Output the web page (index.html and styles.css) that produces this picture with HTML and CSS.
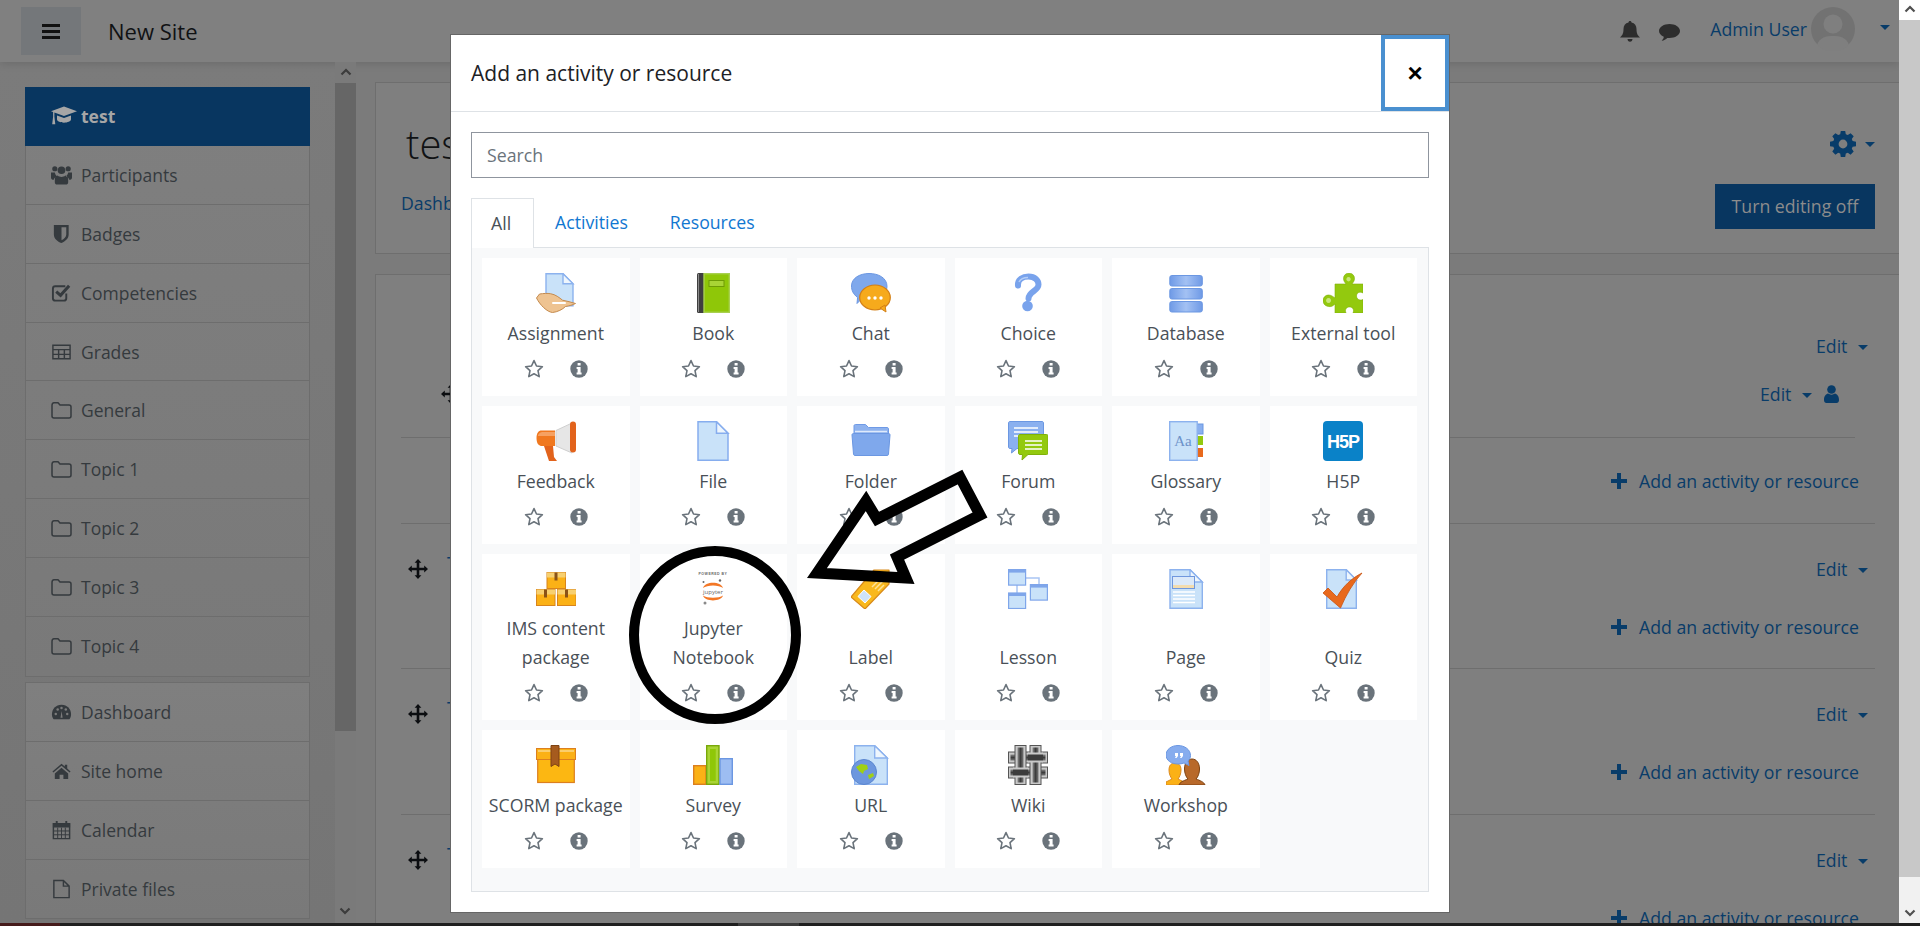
FILE: index.html
```html
<!DOCTYPE html>
<html>
<head>
	<title>New Site: test</title>
	<link rel="stylesheet" href="styles.css">
</head>
<body>
	<svg class="defs" width="0" height="0">
		<symbol id="i-star" viewBox="0 0 20 20"><path d="M10 1.6l2.5 5.4 5.9.7-4.4 4 1.2 5.9L10 14.7l-5.2 2.9L6 11.7l-4.4-4 5.9-.7z" fill="#fff" stroke="#6a737b" stroke-width="1.6" stroke-linejoin="round"/></symbol>
		<symbol id="i-info" viewBox="0 0 18 18"><circle cx="9" cy="9" r="8.7" fill="#6a737b"/><path d="M7.6 2.9h3v2.6h-3zM6.6 7h4v5.6h1v2H6.6v-2h1V9h-1z" fill="#fff"/></symbol>
		<symbol id="i-folder" viewBox="0 0 21 18"><path d="M1 4.5C1 2.6 2 1.700 3 1.700h4l2 2.300h9c1.200 0 2 .8 2 2v9c0 1.200-.8 2-2 2H3c-1.200 0-2-.8-2-2z" fill="none" stroke="currentColor" stroke-width="1.500"/></symbol>
		<symbol id="i-move" viewBox="0 0 20 20"><path d="M10 0l3.400 3.800h-2.100v4.900h4.900V6.600L20 10l-3.800 3.400v-2.100h-4.900v4.900h2.100L10 20l-3.400-3.800h2.100v-4.900H3.800v2.100L0 10l3.800-3.400v2.100h4.900V3.800H6.600z" fill="#0b0d10"/></symbol>
		<symbol id="i-plus" viewBox="0 0 16 16"><path d="M6 0h4v6h6v4h-6v6H6v-6H0V6h6z" fill="#083c69"/></symbol>
	</svg>

	<div class="window">
		<div class="page">
			<header class="navbar">
				<div class="nav-left">
					<button class="burger"><span></span><span></span><span></span></button>
					<span class="brand">New Site</span>
				</div>
				<div class="nav-right">
					<svg class="bell" viewBox="0 0 20 21"><path d="M10 0c1 0 1.500.7 1.500 1.500 3.300.6 5 3.200 5 6.500 0 5 1.500 6.500 3.500 8.500H0c2-2 3.500-3.500 3.500-8.500 0-3.300 1.700-5.900 5-6.500C8.500.7 9 0 10 0zM7.500 18h5c0 1.500-1 2.700-2.500 2.700S7.500 19.500 7.500 18z" fill="#2d2d2d"/></svg>
					<svg class="bubble" viewBox="0 0 21 18"><path d="M10.500 1C16 1 21 3.800 21 8s-5 7-10.500 7c-.8 0-1.500 0-2.200-.1C6.800 16.200 5 17.500 2.700 17.800c1-1.200 2-2.400 2.100-4C2 12.500 0 10.500 0 8c0-4.200 5-7 10.500-7z" fill="#2d2d2d"/></svg>
					<a class="user-name">Admin User</a>
					<span class="avatar">
						<svg viewBox="0 0 44 44"><circle cx="22" cy="22" r="22" fill="#727272"/><circle cx="22" cy="17" r="9.500" fill="#7f7f7f"/><path d="M6 38c3-8 9-9 16-9s13 1 16 9a22 22 0 0 1-32 0z" fill="#7f7f7f"/></svg>
					</span>
					<span class="caret caret-user"></span>
				</div>
			</header>

			<div class="layout">
				<aside class="drawer">
					<nav class="drawer-nav">
						<ul class="nav-group">
							<li class="nav-item active">
								<svg class="nav-icon cap" viewBox="0 0 26 20"><path d="M13 .5l13 4.700-13 4.800L3.400 6.500v4.200l.9 7.500H1.200l.9-7.500V6L0 5.200zM6 9.500l7 2.600 7-2.600v3.800c0 2-3.500 3.400-7 3.400S6 15.300 6 13.300z" fill="#a6a6a6"/></svg>
								<b>test</b>
							</li>
							<li class="nav-item">
								<svg class="nav-icon" viewBox="0 0 22 20"><g fill="currentColor"><circle cx="4" cy="3.500" r="2.700"/><circle cx="18" cy="3.500" r="2.700"/><circle cx="11" cy="5" r="4"/><path d="M0 7.500h4c.5 2 1 3 2.300 4-2 .5-3 1.700-3.400 3.500C1 15 0 14 0 12.500zM22 7.500h-4c-.5 2-1 3-2.300 4 2 .5 3 1.700 3.400 3.500 1.900 0 2.900-1 2.900-2.500zM7 10.500c1 1 2.500 1.500 4 1.500s3-.5 4-1.500c1.900.4 3 2 3 4.500v2.500c0 1.500-1 2.500-2.500 2.500h-9C5 20 4 19 4 17.500V15c0-2.500 1.100-4.100 3-4.500z"/></g></svg>
								<span>Participants</span>
							</li>
							<li class="nav-item">
								<svg class="nav-icon" viewBox="0 0 22 20"><path d="M3 .5h15.500v10c0 4.500-4 7.500-7.700 9C7 18 3 15 3 10.500zM11 3v13.500c2.700-1.300 5-3.400 5-6V3z" fill="currentColor" fill-rule="evenodd"/></svg>
								<span>Badges</span>
							</li>
							<li class="nav-item">
								<svg class="nav-icon" viewBox="0 0 22 20"><path d="M16 10.500v5c0 1.400-1 2.500-2.500 2.500h-9C3 18 2 16.900 2 15.500v-10C2 4.100 3 3 4.500 3H15" fill="none" stroke="currentColor" stroke-width="2"/><path d="M5.500 8.500l4.500 4L19 2.500" fill="none" stroke="currentColor" stroke-width="3.200"/></svg>
								<span>Competencies</span>
							</li>
							<li class="nav-item">
								<svg class="nav-icon" viewBox="0 0 22 18"><path d="M2 2h18v14H2zM2 6.500h18M2 11.500h18M8 6.500V16M14 6.500V16" fill="none" stroke="currentColor" stroke-width="1.500"/></svg>
								<span>Grades</span>
							</li>
							<li class="nav-item"><svg class="nav-icon"><use href="#i-folder"/></svg><span>General</span></li>
							<li class="nav-item"><svg class="nav-icon"><use href="#i-folder"/></svg><span>Topic 1</span></li>
							<li class="nav-item"><svg class="nav-icon"><use href="#i-folder"/></svg><span>Topic 2</span></li>
							<li class="nav-item"><svg class="nav-icon"><use href="#i-folder"/></svg><span>Topic 3</span></li>
							<li class="nav-item"><svg class="nav-icon"><use href="#i-folder"/></svg><span>Topic 4</span></li>
						</ul>
						<ul class="nav-group second">
							<li class="nav-item">
								<svg class="nav-icon" viewBox="0 0 22 18"><path d="M11 1.500C5 1.500 1 6 1 11.500c0 1.800.5 3.200 1.300 4.500.3.400.7.500 1.200.5h15c.5 0 .9-.1 1.200-.5.800-1.300 1.300-2.700 1.300-4.500 0-5.500-4-10-10-10z" fill="currentColor"/><g fill="#7b7b7b"><circle cx="5" cy="11" r="1.300"/><circle cx="7" cy="6.500" r="1.300"/><circle cx="11" cy="4.700" r="1.300"/><circle cx="15.500" cy="6.500" r="1.300"/><circle cx="17" cy="11" r="1.300"/><path d="M10 15l1-7 1.200 7z"/></g></svg>
								<span>Dashboard</span>
							</li>
							<li class="nav-item">
								<svg class="nav-icon" viewBox="0 0 22 18"><path d="M11 1.500L1.500 9.500l1 1.200L11 3.600l8.500 7.100 1-1.200-3.500-3V2.500h-2.500v1.700zM4 11.500L11 5.600l7 5.900v6h-5v-4.500H9v4.500H4z" fill="currentColor"/></svg>
								<span>Site home</span>
							</li>
							<li class="nav-item">
								<svg class="nav-icon" viewBox="0 0 22 20"><path d="M2.500 3.500h17v15.500h-17z" fill="none" stroke="currentColor" stroke-width="1.500"/><path d="M2 3h18v4.500H2zM5 .5h2v4.500H5zM15 .5h2v4.500h-2z" fill="currentColor"/><path d="M2.500 11h17M2.500 15h17M7 7.500V19M11 7.500V19M15 7.500V19" fill="none" stroke="currentColor" stroke-width="1"/></svg>
								<span>Calendar</span>
							</li>
							<li class="nav-item">
								<svg class="nav-icon" viewBox="0 0 22 20"><path d="M3 1h10l6 6v12H3zM13 1v6h6" fill="none" stroke="currentColor" stroke-width="1.500"/></svg>
								<span>Private files</span>
							</li>
						</ul>
					</nav>
					<div class="drawer-scroll">
						<svg class="chev" viewBox="0 0 12 8"><path d="M1.500 6.500L6 2l4.500 4.500" fill="none" stroke="#3c3c3c" stroke-width="2.200"/></svg>
						<div class="drawer-thumb"></div>
						<svg class="chev down" viewBox="0 0 12 8"><path d="M1.500 1.500L6 6l4.500-4.500" fill="none" stroke="#3c3c3c" stroke-width="2.200"/></svg>
					</div>
				</aside>

				<main class="main">
					<section class="head-card">
						<div class="head-left">
							<h1>test</h1>
							<a class="crumb">Dashboard</a>
						</div>
						<div class="head-right">
							<div class="gear-row">
								<svg class="gear" viewBox="0 0 26 26"><path d="M10.800 0h4.400l.6 3.300 2 .8 2.800-1.900 3.100 3.100-1.900 2.800.8 2 3.400.7v4.400l-3.400.6-.8 2 1.900 2.800-3.100 3.100-2.800-1.900-2 .8-.6 3.400h-4.400l-.6-3.400-2-.8-2.800 1.900-3.100-3.100 1.900-2.800-.8-2L0 15.200v-4.400l3.400-.7.800-2-1.900-2.800 3.100-3.100 2.800 1.900 2-.8zM13 8.600a4.400 4.400 0 1 0 0 8.800 4.400 4.400 0 0 0 0-8.800z" fill="#083c69" fill-rule="evenodd"/></svg>
								<span class="caret"></span>
							</div>
							<a class="btn-edit">Turn editing off</a>
						</div>
					</section>

					<section class="course">
						<div class="sec first">
							<div class="sec-head"><a class="edit">Edit <span class="caret"></span></a></div>
							<div class="activity">
								<svg class="move"><use href="#i-move"/></svg>
								<a class="edit">Edit <span class="caret"></span></a>
								<svg class="user-mini" viewBox="0 0 15 18"><circle cx="7.500" cy="4.500" r="4.300" fill="#083c69"/><path d="M0 15c0-4 2-6 4-6.500 2 1.500 5 1.500 7 0 2 .5 4 2.500 4 6.500 0 2-1 3-2.500 3h-10C1 18 0 17 0 15z" fill="#083c69"/></svg>
							</div>
							<a class="add"><svg class="plus"><use href="#i-plus"/></svg>Add an activity or resource</a>
						</div>
						<div class="sec">
							<div class="sec-head">
								<svg class="move"><use href="#i-move"/></svg>
								<span class="sec-title">Topic 1</span>
								<a class="edit">Edit <span class="caret"></span></a>
							</div>
							<a class="add"><svg class="plus"><use href="#i-plus"/></svg>Add an activity or resource</a>
						</div>
						<div class="sec">
							<div class="sec-head">
								<svg class="move"><use href="#i-move"/></svg>
								<span class="sec-title">Topic 2</span>
								<a class="edit">Edit <span class="caret"></span></a>
							</div>
							<a class="add"><svg class="plus"><use href="#i-plus"/></svg>Add an activity or resource</a>
						</div>
						<div class="sec">
							<div class="sec-head">
								<svg class="move"><use href="#i-move"/></svg>
								<span class="sec-title">Topic 3</span>
								<a class="edit">Edit <span class="caret"></span></a>
							</div>
							<a class="add"><svg class="plus"><use href="#i-plus"/></svg>Add an activity or resource</a>
						</div>
					</section>
				</main>
			</div>
		</div>

		<div class="win-scroll">
			<div class="win-btn">
				<svg class="win-chev" viewBox="0 0 12 8"><path d="M1.500 6.500L6 2l4.500 4.500" fill="none" stroke="#505050" stroke-width="2.200"/></svg>
			</div>
			<div class="win-thumb"></div>
			<div class="win-track">
				<svg class="win-chev" viewBox="0 0 12 8"><path d="M1.500 1.500L6 6l4.500-4.500" fill="none" stroke="#505050" stroke-width="2.200"/></svg>
			</div>
		</div>
	</div>

	<div class="taskbar"><span class="task-red"></span><span class="task-on"></span></div>

	<!-- Add activity dialog -->
	<div class="modal">
		<div class="modal-header">
			<h5>Add an activity or resource</h5>
			<button class="close">&times;</button>
		</div>
		<div class="modal-body">
			<div class="search">Search</div>
			<ul class="tabs">
				<li class="tab current">All</li>
				<li class="tab">Activities</li>
				<li class="tab">Resources</li>
			</ul>
			<div class="panel">
				<div class="card">
					<svg class="mod" viewBox="0 0 40 40"><path d="M10 .7h17l10 10v22H10z" fill="#c9e2f9" stroke="#8cb2ee" stroke-width="1.400"/><path d="M27 .7v10h10z" fill="#eef6fd" stroke="#8cb2ee" stroke-width="1.400"/><path d="M.5 25l3-4c4-.6 8-.8 11-.3 5 .8 9 4 12 6.500 4 1 9 1.800 13 3.300-3 1.500-6 2.300-10 3-3 3-8 5.500-13 6C11 39 4 32 .5 25z" fill="#eec391" stroke="#c48a4d" stroke-width="1"/><path d="M17 30h12" stroke="#fff" stroke-width="2" stroke-linecap="round"/></svg>
					<span class="label">Assignment</span>
					<div class="actions"><svg class="star"><use href="#i-star"/></svg><svg class="info"><use href="#i-info"/></svg></div>
				</div>
				<div class="card">
					<svg class="mod" viewBox="0 0 40 40"><rect x="4" y="0" width="9" height="40" rx="1.500" fill="#3f3f3f"/><path d="M5.500 1v38" stroke="#8a8a8a"/><rect x="11" y=".7" width="25.300" height="38.600" fill="#8fc708" stroke="#a8d050" stroke-width="1.400"/><rect x="16" y="7.500" width="15" height="6" fill="#a9d435" stroke="#6f9c05"/></svg>
					<span class="label">Book</span>
					<div class="actions"><svg class="star"><use href="#i-star"/></svg><svg class="info"><use href="#i-info"/></svg></div>
				</div>
				<div class="card">
					<svg class="mod" viewBox="0 0 40 40"><path d="M18 .5c9 0 18 4 18 13 0 8-8 12-16 12h-9l-5 5 .6-6C2 21 .5 17 .5 13 .5 5 9 .5 18 .5z" fill="#7fa8ec" stroke="#6b97e2"/><ellipse cx="24" cy="24.500" rx="15.300" ry="12.500" fill="#f6aa1c" stroke="#d37f16" stroke-width="1.200"/><path d="M29 35l6 4-1-7z" fill="#f6aa1c" stroke="#d37f16"/><circle cx="18" cy="25" r="1.700" fill="#fff"/><circle cx="24" cy="25" r="1.700" fill="#fff"/><circle cx="30" cy="25" r="1.700" fill="#fff"/></svg>
					<span class="label">Chat</span>
					<div class="actions"><svg class="star"><use href="#i-star"/></svg><svg class="info"><use href="#i-info"/></svg></div>
				</div>
				<div class="card">
					<svg class="mod" viewBox="0 0 40 40"><path d="M10 12.500C9.500 6 15 3.500 20.500 3.500 27 3.500 30.500 7.500 30.500 11.500c0 6.500-10 7-10 14" fill="none" stroke="#79a3ec" stroke-width="6" stroke-linecap="round"/><path d="M11 9C13 5 17 4.500 20 4.500" fill="none" stroke="#b5cef7" stroke-width="1.500"/><circle cx="19.500" cy="33" r="5.300" fill="#79a3ec"/></svg>
					<span class="label">Choice</span>
					<div class="actions"><svg class="star"><use href="#i-star"/></svg><svg class="info"><use href="#i-info"/></svg></div>
				</div>
				<div class="card">
					<svg class="mod" viewBox="0 0 40 40"><defs><linearGradient id="dbg" x1="0" x2="1" y1="0" y2="0"><stop offset="0" stop-color="#6f9ae6"/><stop offset=".5" stop-color="#a3c1f3"/><stop offset="1" stop-color="#6f9ae6"/></linearGradient></defs><g fill="url(#dbg)" stroke="#6b97e2"><rect x="3.800" y="2.500" width="32.500" height="10.500" rx="2"/><rect x="3.800" y="15.500" width="32.500" height="10.500" rx="2"/><rect x="3.800" y="28.500" width="32.500" height="10.500" rx="2"/></g></svg>
					<span class="label">Database</span>
					<div class="actions"><svg class="star"><use href="#i-star"/></svg><svg class="info"><use href="#i-info"/></svg></div>
				</div>
				<div class="card">
					<svg class="mod" viewBox="0 0 40 40"><path d="M12 11h11c-1-1.500-2.500-3-2.500-5.500a5.500 5.500 0 0 1 11 0c0 2.500-1.500 4-2.500 5.500h11v9c-3.500-2-6.500 0-6.500 3s3 5 6.500 3.500V40h-10c1.500-3.500-.5-6-3.500-6s-5 2.500-3.500 6H12v-9c-2 2-4 3-6.500 2.500C2 33 0 30.500 0 27.500 0 24 3 22 5.500 22c2.500 0 4.500 1.500 6.500 3z" fill="#93c90e" stroke="#7fb00a" stroke-width=".6"/><path d="M25.500 4a2.200 2.200 0 1 0 .1 0M5.500 25a2.500 2.500 0 1 0 .1 0" fill="#c8e67a"/></svg>
					<span class="label">External tool</span>
					<div class="actions"><svg class="star"><use href="#i-star"/></svg><svg class="info"><use href="#i-info"/></svg></div>
				</div>

				<div class="card">
					<svg class="mod" viewBox="0 0 40 40"><path d="M8 25l5 15h8l-3-4-1-11z" fill="#e2631c"/><path d="M20 9.500L36 2v30L20 25z" fill="#e6e6e6" stroke="#cfcfcf"/><path d="M5.500 9.500H19v15.500H6c-3 0-5.500-2-5.500-8 0-5 2-7.500 5-7.500z" fill="#f0781f"/><path d="M2 14c1.500-2.500 3-3 6-3h11v4H2z" fill="#f6a161"/><rect x="34" y=".5" width="6" height="31" rx="3" fill="#e2631c"/></svg>
					<span class="label">Feedback</span>
					<div class="actions"><svg class="star"><use href="#i-star"/></svg><svg class="info"><use href="#i-info"/></svg></div>
				</div>
				<div class="card">
					<svg class="mod" viewBox="0 0 40 40"><path d="M5 .8h18.500L35 12.300v26.900H5z" fill="#c9e2f9" stroke="#86adee" stroke-width="1.500"/><path d="M23.500.8v11.500H35z" fill="#eef6fd" stroke="#86adee" stroke-width="1.500"/></svg>
					<span class="label">File</span>
					<div class="actions"><svg class="star"><use href="#i-star"/></svg><svg class="info"><use href="#i-info"/></svg></div>
				</div>
				<div class="card">
					<svg class="mod" viewBox="0 0 40 40"><path d="M3 5c0-1 .6-1.500 1.500-1.500h10l3 3H36c1 0 1.500.6 1.500 1.500v5H3z" fill="#8eb2ee" stroke="#6f9ae6"/><path d="M4 10.500h32" stroke="#dfeafb" stroke-width="1.500"/><path d="M1 14c0-1 .6-1.500 1.500-1.500h35c1 0 1.500.6 1.500 1.500l-1.500 19c0 1-.6 1.500-1.500 1.500H4c-1 0-1.500-.6-1.500-1.500z" fill="#7fa8ec" stroke="#6b97e2"/></svg>
					<span class="label">Folder</span>
					<div class="actions"><svg class="star"><use href="#i-star"/></svg><svg class="info"><use href="#i-info"/></svg></div>
				</div>
				<div class="card">
					<svg class="mod" viewBox="0 0 40 40"><path d="M2 .5h32c1 0 1.500.6 1.500 1.500v24c0 1-.6 1.500-1.500 1.500H9L3.500 32l.5-4.500H2c-1 0-1.500-.6-1.500-1.500V2C.5 1.100 1 .5 2 .5z" fill="#8ab0ef" stroke="#6b97e2"/><path d="M6 7h24M6 11h24M6 15h24" stroke="#fff" stroke-width="1.500"/><path d="M12 13.500h26.500c1 0 1.500.6 1.500 1.500v17c0 1-.6 1.500-1.500 1.500H20l-6 5.500.5-5.500H12c-1 0-1.500-.6-1.500-1.500V15c0-1 .6-1.500 1.500-1.500z" fill="#93c90e" stroke="#7fb00a"/><path d="M17 20h17M17 24h17M17 28h17" stroke="#fff" stroke-width="1.500"/></svg>
					<span class="label">Forum</span>
					<div class="actions"><svg class="star"><use href="#i-star"/></svg><svg class="info"><use href="#i-info"/></svg></div>
				</div>
				<div class="card">
					<svg class="mod" viewBox="0 0 40 40"><rect x="30" y="3" width="7" height="10" fill="#8ab0ef" stroke="#6b97e2"/><rect x="31" y="15" width="6" height="9" fill="#93c90e"/><rect x="31" y="27" width="6" height="9" fill="#e8691d"/><rect x="3.700" y=".7" width="27.500" height="38.600" fill="#c9e2f9" stroke="#8cb2ee" stroke-width="1.400"/><text x="17" y="25" class="aa">Aa</text></svg>
					<span class="label">Glossary</span>
					<div class="actions"><svg class="star"><use href="#i-star"/></svg><svg class="info"><use href="#i-info"/></svg></div>
				</div>
				<div class="card">
					<svg class="mod" viewBox="0 0 40 40"><rect width="40" height="40" rx="4" fill="#0a82c8"/><text x="20" y="26.500" class="h5p">H5P</text></svg>
					<span class="label">H5P</span>
					<div class="actions"><svg class="star"><use href="#i-star"/></svg><svg class="info"><use href="#i-info"/></svg></div>
				</div>

				<div class="card">
					<svg class="mod" viewBox="0 0 40 40"><g fill="#fbb116" stroke="#d8841c"><rect x="11" y="3.500" width="18.500" height="16"/><rect x=".5" y="20.500" width="18.500" height="16"/><rect x="21.500" y="20.500" width="18.500" height="16"/></g><g fill="#f7d070"><rect x="11" y="3.500" width="18.500" height="5"/><rect x=".5" y="20.500" width="18.500" height="5"/><rect x="21.500" y="20.500" width="18.500" height="5"/></g><g fill="#8a5216"><rect x="18.500" y="3.500" width="3" height="8"/><rect x="8" y="20.500" width="3" height="8"/><rect x="29" y="20.500" width="3" height="8"/></g></svg>
					<span class="label">IMS content package</span>
					<div class="actions"><svg class="star"><use href="#i-star"/></svg><svg class="info"><use href="#i-info"/></svg></div>
				</div>
				<div class="card">
					<svg class="mod" viewBox="0 0 40 40"><text x="20" y="6" class="powered">POWERED BY</text><path d="M10 19c2-7 18-7 20 0-4-3.500-16-3.500-20 0zM10 26.500c2 6.500 18 6.500 20 0-4 3-16 3-20 0z" fill="#f37726"/><text x="20" y="24.500" class="jup">jupyter</text><circle cx="10.500" cy="13" r="1" fill="#666"/><circle cx="27" cy="11.500" r="1.200" fill="#666"/><circle cx="12" cy="34" r="1.500" fill="#8a8a8a"/></svg>
					<span class="label">Jupyter Notebook</span>
					<div class="actions"><svg class="star"><use href="#i-star"/></svg><svg class="info"><use href="#i-info"/></svg></div>
				</div>
				<div class="card">
					<svg class="mod" viewBox="0 0 40 40"><path d="M0 28L23 1h15v14L14 40z" fill="#f9b81d" stroke="#d88a1a" stroke-width="1.200" stroke-linejoin="round"/><path d="M7 27.500l6-6.500 7 6.500-6 6.500z" fill="#cfe3f8" stroke="#fff"/><path d="M21 18l8-8M24 20l8-8M27 22l6-6" stroke="#fde39a" stroke-width="1.500"/></svg>
					<span class="label">Label</span>
					<div class="actions"><svg class="star"><use href="#i-star"/></svg><svg class="info"><use href="#i-info"/></svg></div>
				</div>
				<div class="card">
					<svg class="mod" viewBox="0 0 40 40"><path d="M18 9h13v7M9 16v8" fill="none" stroke="#a9c5f4" stroke-width="1.500"/><g fill="#c9e2f9" stroke="#7fa6ea" stroke-width="1.200"><rect x=".6" y=".6" width="17" height="15.500"/><rect x=".6" y="24" width="17" height="15.500"/><rect x="22.400" y="15.600" width="17" height="15.500"/></g><g fill="#7fa6ea"><rect x=".6" y=".6" width="17" height="3"/><rect x=".6" y="24" width="17" height="3"/><rect x="22.400" y="15.600" width="17" height="3"/></g></svg>
					<span class="label">Lesson</span>
					<div class="actions"><svg class="star"><use href="#i-star"/></svg><svg class="info"><use href="#i-info"/></svg></div>
				</div>
				<div class="card">
					<svg class="mod" viewBox="0 0 40 40"><path d="M4 .7h20L36.300 13v26.300H4z" fill="#c9e2f9" stroke="#8cb2ee" stroke-width="1.400"/><path d="M24 .7V13h12.300z" fill="#eef6fd" stroke="#8cb2ee" stroke-width="1.400"/><rect x="6.500" y="7.500" width="22" height="12" fill="#dbe9f9" stroke="#6f97dd"/><path d="M7 16h21v3H7z" fill="#f3dcae"/><path d="M7 23h22M7 26.500h22M7 30h22M7 33.500h22" stroke="#fff" stroke-width="1.300"/></svg>
					<span class="label">Page</span>
					<div class="actions"><svg class="star"><use href="#i-star"/></svg><svg class="info"><use href="#i-info"/></svg></div>
				</div>
				<div class="card">
					<svg class="mod" viewBox="0 0 40 40"><path d="M3.700.7h19.500L33.300 11v28.300H3.700z" fill="#c9e2f9" stroke="#8cb2ee" stroke-width="1.400"/><path d="M23.200.7V11h10.100z" fill="#eef6fd" stroke="#8cb2ee" stroke-width="1.400"/><path d="M0 24l5-5 9 9C20 17 29 9 39 4 30 14 23 26 17.500 39z" fill="#e8691d" stroke="#c8520f" stroke-width=".8"/></svg>
					<span class="label">Quiz</span>
					<div class="actions"><svg class="star"><use href="#i-star"/></svg><svg class="info"><use href="#i-info"/></svg></div>
				</div>

				<div class="card">
					<svg class="mod" viewBox="0 0 40 40"><rect x="1.700" y="12" width="36.600" height="25.500" fill="#fcb712" stroke="#dc7f1f" stroke-width="1.200"/><rect x=".5" y="3.500" width="39" height="11" fill="#fbb116" stroke="#dc7f1f"/><path d="M2 6h36" stroke="#fbd98a" stroke-width="1.500"/><path d="M15 .5h8v21l-4-2.500-4 2.500z" fill="#a65b1e" stroke="#7e4312"/></svg>
					<span class="label">SCORM package</span>
					<div class="actions"><svg class="star"><use href="#i-star"/></svg><svg class="info"><use href="#i-info"/></svg></div>
				</div>
				<div class="card">
					<svg class="mod" viewBox="0 0 40 40"><rect x=".7" y="20.700" width="12.300" height="18.600" fill="#fbb116" stroke="#dc7f1f" stroke-width="1.400"/><rect x="13.700" y=".7" width="12.300" height="38.600" fill="#a9d435" stroke="#79a80a" stroke-width="1.400"/><rect x="27" y="13.700" width="12.300" height="25.600" fill="#9dbdf2" stroke="#6b97e2" stroke-width="1.400"/><rect x="17" y="4" width="5.700" height="32" fill="#8fc708"/></svg>
					<span class="label">Survey</span>
					<div class="actions"><svg class="star"><use href="#i-star"/></svg><svg class="info"><use href="#i-info"/></svg></div>
				</div>
				<div class="card">
					<svg class="mod" viewBox="0 0 40 40"><path d="M3.700.7h20L36.300 13v26.300H3.700z" fill="#c9e2f9" stroke="#8cb2ee" stroke-width="1.400"/><path d="M23.700.7V13h12.600z" fill="#eef6fd" stroke="#8cb2ee" stroke-width="1.400"/><circle cx="13" cy="27" r="12.500" fill="#6d97de" stroke="#5b86cf"/><path d="M5 22l5-3 6 1 1 4-4 2-1 3-4-3zM17 30l5-2 1 3-5 3z" fill="#a0d014"/></svg>
					<span class="label">URL</span>
					<div class="actions"><svg class="star"><use href="#i-star"/></svg><svg class="info"><use href="#i-info"/></svg></div>
				</div>
				<div class="card">
					<svg class="mod" viewBox="0 0 40 40"><defs><linearGradient id="wk1" x1="0" x2="1" y1="0" y2="0"><stop offset="0" stop-color="#8a8a8a"/><stop offset=".5" stop-color="#3c3c3c"/><stop offset="1" stop-color="#777"/></linearGradient><linearGradient id="wk2" x1="0" x2="0" y1="0" y2="1"><stop offset="0" stop-color="#8a8a8a"/><stop offset=".5" stop-color="#3c3c3c"/><stop offset="1" stop-color="#777"/></linearGradient></defs>
						<g stroke="#555" stroke-width="1"><rect x=".5" y="7" width="39" height="11" fill="#c9c9c9"/><rect x=".5" y="22" width="39" height="11" fill="#c9c9c9"/><rect x="2.500" y="9.500" width="35" height="6" fill="url(#wk2)" stroke="none"/><rect x="2.500" y="24.500" width="35" height="6" fill="url(#wk2)" stroke="none"/></g>
						<g stroke="#555" stroke-width="1"><rect x="7" y=".5" width="11" height="39" fill="#c9c9c9"/><rect x="22" y=".5" width="11" height="39" fill="#c9c9c9"/><rect x="9.500" y="2.500" width="6" height="35" fill="url(#wk1)" stroke="none"/><rect x="24.500" y="2.500" width="6" height="35" fill="url(#wk1)" stroke="none"/></g>
						<rect x="20" y="7.500" width="15" height="10" fill="#c9c9c9"/><rect x="20" y="9.500" width="15" height="6" fill="#3c3c3c"/>
						<rect x="5" y="22.500" width="15" height="10" fill="#c9c9c9"/><rect x="5" y="24.500" width="15" height="6" fill="#3c3c3c"/>
					</svg>
					<span class="label">Wiki</span>
					<div class="actions"><svg class="star"><use href="#i-star"/></svg><svg class="info"><use href="#i-info"/></svg></div>
				</div>
				<div class="card">
					<svg class="mod" viewBox="0 0 40 40"><path d="M0 40v-3l6-3c-1.500-2-3-5-3-9 0-5 2.500-7 6-7s6 2 6 7c0 4-1.500 7-3 9l6 3v3z" fill="#fbb116" stroke="#dc8a1f"/><path d="M13 40c1-3 4-4 9-6-2-2-3.500-6-3.500-10 0-6 3-10 7.500-10s7.500 4 7.500 10c0 4-1.500 8-3.500 10 4 1.500 8 3 9 6z" fill="#b8692a" stroke="#7e4312"/><path d="M12 .5C18.500.5 24.500 4.500 24.500 10.500c0 2-1 4-2.500 5.500l1 4.500-5-2.500c-2 .8-4 1-6 1C5.500 19 0 15.500 0 10 0 4.500 5.500.5 12 .5z" fill="#86acee" stroke="#6b97e2"/><path d="M9 8h3v3l-1.500 2H9l1-2H9zM14 8h3v3l-1.500 2H14l1-2h-1z" fill="#fff"/></svg>
					<span class="label">Workshop</span>
					<div class="actions"><svg class="star"><use href="#i-star"/></svg><svg class="info"><use href="#i-info"/></svg></div>
				</div>
			</div>
		</div>
	</div>

	<!-- hand drawn annotation on top of the dialog -->
	<svg class="annotation" viewBox="0 0 1920 926">
		<ellipse cx="715" cy="635" rx="81" ry="84" fill="none" stroke="#000" stroke-width="10"/>
		<polygon points="817,573 866,501 877,519 960,477 980,515 897,557 906,578" fill="none" stroke="#000" stroke-width="11" stroke-miterlimit="10"/>
	</svg>
</body>
</html>
```

FILE: styles.css
```css
* {
	box-sizing: border-box;
}
html, body {
	height: 926px;
	margin: 0;
	overflow: hidden;
}
body {
	font-family: "Open Sans", "Noto Sans", sans-serif;
	font-size: 17.7px;
	color: #353a3e;
	background-color: #7b7b7b;
}
ul {
	list-style: none;
	margin: 0;
	padding: 0;
}
.defs {
	display: block;
	height: 0;
}

.window {
	display: flex;
	height: 923px;
}
.page {
	width: 1899px;
	overflow: hidden;
}
.taskbar {
	display: flex;
	height: 3px;
	background-color: #1f1f1f;
}
.task-red {
	width: 60px;
	background-color: #451a1a;
}
.task-on {
	width: 61px;
	margin-left: 678px;
	background-color: #3a3a3a;
}

/* Top bar */
.navbar {
	display: flex;
	justify-content: space-between;
	align-items: center;
	height: 62px;
	background-color: #808080;
	box-shadow: 0 2px 8px rgba(0, 0, 0, 0.12);
	position: relative;
}
.nav-left {
	display: flex;
	align-items: center;
}
.burger {
	display: flex;
	flex-direction: column;
	justify-content: center;
	align-items: center;
	gap: 3px;
	width: 60px;
	height: 48px;
	margin-left: 21px;
	border: 0;
	background-color: #74777a;
}
.burger span {
	width: 18px;
	height: 3px;
	background-color: #111;
}
.brand {
	margin-left: 27px;
	font-size: 22px;
	color: #101214;
}
.nav-right {
	display: flex;
	align-items: center;
	padding-right: 9px;
}
.bell {
	width: 20px;
	height: 21px;
}
.bubble {
	width: 21px;
	height: 18px;
	margin: 2px 0 0 19px;
}
.user-name {
	margin: 0 0 4px 30px;
	color: #093c69;
}
.avatar {
	width: 44px;
	height: 44px;
	margin: 0 0 4px 4px;
}
.avatar svg {
	display: block;
}
.caret {
	display: inline-block;
	width: 0;
	height: 0;
	border-top: 5px solid #083c69;
	border-left: 5px solid transparent;
	border-right: 5px solid transparent;
}
.caret-user {
	margin: 0 0 8px 25px;
}

/* Left drawer */
.layout {
	display: flex;
	height: 861px;
}
.drawer {
	display: flex;
	width: 356px;
	background: linear-gradient(#7b7b7b, #757575);
}
.drawer-nav {
	width: 335px;
	padding: 25px 25px 0;
	overflow: hidden;
}
.nav-group {
	background: linear-gradient(#7f7f7f, #797979);
	border: 1px solid #6d6d6d;
	border-top: 0;
}
.nav-group.second {
	margin-top: 5px;
	border-top: 1px solid #6d6d6d;
}
.nav-item {
	display: flex;
	align-items: center;
	height: 58.9px;
	padding-left: 25px;
	border-bottom: 1px solid #6d6d6d;
	font-size: 17.5px;
	color: #353a3e;
}
.nav-item:last-child {
	border-bottom: 0;
}
.nav-item.active {
	margin: 0 -1px;
	padding-left: 26px;
	background-color: #083660;
	border-bottom: 0;
	color: #a6a6a6;
}
.nav-icon {
	flex: none;
	width: 21px;
	height: 20px;
	margin-right: 9px;
}
.nav-icon.cap {
	width: 26px;
	margin-right: 4px;
}
.drawer-scroll {
	position: relative;
	width: 21px;
	background-color: #7a7a7a;
}
.chev {
	display: block;
	width: 12px;
	height: 8px;
	margin: 6px auto 7px;
}
.chev.down {
	margin: 0 auto;
	position: absolute;
	left: 4px;
	bottom: 8px;
}
.drawer-thumb {
	height: 648px;
	background-color: #666;
}

/* Main column */
.main {
	flex: 1;
	padding: 20px 0 0 19px;
}
.head-card {
	display: flex;
	justify-content: space-between;
	height: 172px;
	padding-right: 24px;
	background-color: #7f7f7f;
	border: 1px solid #6e6e6e;
	border-right: 0;
}
.head-left {
	padding: 34px 0 0 25px;
}
h1 {
	margin: 0;
	padding-left: 5px;
	font-size: 40px;
	font-weight: 300;
	line-height: 54px;
	color: #101214;
}
.crumb {
	display: block;
	margin-top: 20px;
	color: #093c69;
}
.head-right {
	display: flex;
	flex-direction: column;
	align-items: flex-end;
}
.gear-row {
	display: flex;
	align-items: center;
	gap: 9px;
	margin-top: 48px;
}
.gear {
	width: 26px;
	height: 26px;
}
.btn-edit {
	width: 160px;
	height: 45px;
	margin-top: 27px;
	background-color: #083660;
	color: #8c8c8c;
	line-height: 44px;
	text-align: center;
}
.course {
	height: 700px;
	margin-top: 20px;
	padding-right: 24px;
	background-color: #7f7f7f;
	border: 1px solid #6e6e6e;
	border-right: 0;
}
.sec {
	margin-left: 25px;
	padding: 33px 0 29.5px;
	border-bottom: 1px solid #6e6e6e;
}
.sec.first {
	padding-top: 59px;
}
.sec-head {
	display: flex;
	align-items: center;
	height: 24px;
	padding-left: 7px;
}
.move {
	flex: none;
	width: 20px;
	height: 20px;
}
.sec-title {
	margin: -10px 0 0 19px;
	font-size: 22px;
	color: #093c69;
}
.edit {
	margin-left: auto;
	padding-right: 7px;
	color: #093c69;
}
.edit .caret {
	margin: 0 0 3px 6px;
}
.activity {
	display: flex;
	align-items: center;
	height: 24px;
	margin: 24px 20px 0 0;
	padding: 0 16px 31px 40px;
	box-sizing: content-box;
	border-bottom: 1px solid #6e6e6e;
	position: relative;
}
.activity .edit {
	padding-right: 0;
}
.user-mini {
	width: 15px;
	height: 18px;
	margin-left: 12px;
}
.add {
	display: flex;
	align-items: center;
	justify-content: flex-end;
	height: 24px;
	margin-top: 34px;
	padding-right: 16px;
	color: #093c69;
}
.sec.first .add {
	margin-top: 31px;
}
.plus {
	width: 16px;
	height: 16px;
	margin-right: 12px;
}

/* Window scrollbar */
.win-scroll {
	display: flex;
	flex-direction: column;
	width: 21px;
}
.win-btn {
	height: 20px;
	padding-top: 5px;
	background-color: #fff;
}
.win-thumb {
	height: 857px;
	background-color: #c8c8c8;
}
.win-track {
	height: 46px;
	padding-top: 32px;
	background-color: #f1f1f1;
}
.win-chev {
	display: block;
	width: 12px;
	height: 8px;
	margin: 0 auto;
}

/* Dialog */
.modal {
	position: absolute;
	left: 451px;
	top: 35px;
	display: flex;
	flex-direction: column;
	width: 998px;
	height: 877px;
	background-color: #fff;
	box-shadow: 0 0 0 1px #666;
}
.modal-header {
	display: flex;
	justify-content: space-between;
	align-items: center;
	height: 77px;
	padding-left: 20px;
	border-bottom: 1px solid #dee2e6;
}
h5 {
	margin: 0;
	font-size: 21px;
	font-weight: 400;
	color: #1d2125;
}
.close {
	width: 68px;
	height: 76px;
	padding: 0;
	border: 4px solid #4a90d0;
	background-color: #fff;
	font-family: "Liberation Sans", sans-serif;
	font-size: 26px;
	font-weight: 700;
	color: #000;
}
.modal-body {
	padding: 20px 20px 0;
}
.search {
	height: 46px;
	padding-left: 15px;
	border: 1px solid #8f959e;
	line-height: 44px;
	color: #6a737b;
}
.tabs {
	display: flex;
	height: 50px;
	margin-top: 20px;
}
.tab {
	padding: 0 21px;
	line-height: 49px;
	color: #1177d1;
}
.tab.current {
	width: 63px;
	padding: 0 19px;
	background-color: #fff;
	border: 1px solid #dee2e6;
	border-bottom: 0;
	color: #495057;
	position: relative;
	z-index: 1;
}
.panel {
	display: grid;
	grid-template-columns: repeat(6, 1fr);
	grid-template-rows: 138px 138px 166px 138px;
	gap: 10px;
	height: 645px;
	margin-top: -1px;
	padding: 10px 11px 0 10px;
	background-color: #f8f9fa;
	border: 1px solid #dee2e6;
}
.card {
	display: flex;
	flex-direction: column;
	align-items: center;
	min-width: 0;
	padding-top: 15px;
	background-color: #fff;
	color: #495057;
}
.mod {
	flex: none;
	width: 40px;
	height: 40px;
}
.label {
	margin-top: auto;
	padding: 0 4px;
	line-height: 29px;
	text-align: center;
}
.actions {
	display: flex;
	flex: none;
	justify-content: center;
	align-items: center;
	gap: 26px;
	height: 43px;
	margin-bottom: 5.5px;
}
.star {
	width: 20px;
	height: 20px;
}
.info {
	width: 18px;
	height: 18px;
}
.aa {
	font-family: "Liberation Serif", serif;
	font-size: 15px;
	fill: #6d92c9;
	text-anchor: middle;
}
.h5p {
	font-family: "Liberation Sans", sans-serif;
	font-size: 18px;
	font-weight: 700;
	fill: #fff;
	text-anchor: middle;
	letter-spacing: -1px;
}
.powered {
	font-family: "Liberation Sans", sans-serif;
	font-size: 3.500px;
	font-weight: 700;
	fill: #666;
	text-anchor: middle;
	letter-spacing: .5px;
}
.jup {
	font-family: "Open Sans", sans-serif;
	font-size: 6px;
	fill: #666;
	text-anchor: middle;
}
.annotation {
	position: absolute;
	left: 0;
	top: 0;
	width: 1920px;
	height: 926px;
	pointer-events: none;
}
```
